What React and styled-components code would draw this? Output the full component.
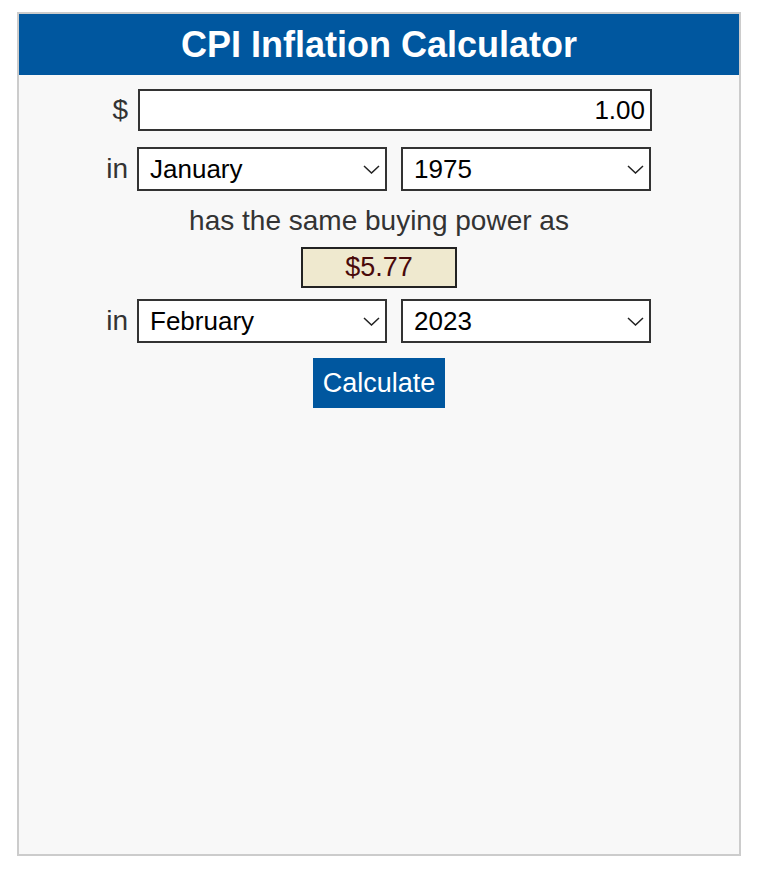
import React, { useState } from "react";
import styled, { createGlobalStyle } from "styled-components";

const GlobalStyle = createGlobalStyle`
  html, body {
    margin: 0;
    padding: 0;
    background: #fff;
    font-family: "Liberation Sans", Arial, sans-serif;
  }
`;

const Panel = styled.div`
  box-sizing: border-box;
  width: 724px;
  height: 844px;
  margin: 12px 0 0 17px;
  border: 2px solid #cccccc;
  background: #f8f8f8;
  display: flex;
  flex-direction: column;
  align-items: center;
`;

const Title = styled.h1`
  align-self: stretch;
  margin: 0;
  height: 61px;
  background: #00579f;
  color: #fff;
  font-size: 36px;
  font-weight: bold;
  display: flex;
  align-items: center;
  justify-content: center;
`;

const Row = styled.div`
  display: grid;
  grid-template-columns: 24px 514px;
  column-gap: 8px;
  align-items: center;
  margin-top: ${p => p.$top}px;
`;

const Label = styled.span`
  text-align: right;
  padding-right: 2px;
  font-size: 28px;
  color: #333;
`;

const AmountInput = styled.input`
  box-sizing: border-box;
  width: 514px;
  height: 42px;
  border: 2px solid #333;
  background: #fff;
  font-family: inherit;
  font-size: 26px;
  color: #000;
  text-align: right;
  padding: 0 5px;
  outline: none;
`;

const Selects = styled.div`
  display: flex;
  gap: 14px;
  margin-left: -1px;
`;

const SelectWrap = styled.div`
  position: relative;
  width: 250px;
  height: 44px;
`;

const Select = styled.select`
  appearance: none;
  box-sizing: border-box;
  width: 100%;
  height: 100%;
  border: 2px solid #333;
  border-radius: 0;
  background: #fff;
  font-family: inherit;
  font-size: 26px;
  color: #000;
  padding: 0 30px 0 11px;
  outline: none;
`;

const Chevron = styled.svg`
  position: absolute;
  right: 7px;
  top: 18px;
  pointer-events: none;
`;

const Caption = styled.div`
  margin-top: 15px;
  font-size: 28px;
  color: #333;
  line-height: 30px;
`;

const Result = styled.div`
  box-sizing: border-box;
  margin-top: 11px;
  width: 156px;
  height: 41px;
  border: 2px solid #222;
  background: #efe9cf;
  color: #4a0a0a;
  font-size: 27px;
  display: flex;
  align-items: center;
  justify-content: center;
`;

const Button = styled.button`
  margin-top: 15px;
  height: 50px;
  padding: 0 10px;
  border: none;
  background: #00579f;
  color: #fff;
  font-family: inherit;
  font-size: 27px;
  cursor: pointer;
`;

const months = [
  "January", "February", "March", "April", "May", "June",
  "July", "August", "September", "October", "November", "December",
];
const years = [];
for (let y = 1913; y <= 2023; y++) years.push(String(y));

function Dropdown({ value, options, onChange }) {
  return (
    <SelectWrap>
      <Select value={value} onChange={e => onChange(e.target.value)}>
        {options.map(o => (
          <option key={o}>{o}</option>
        ))}
      </Select>
      <Chevron width="17" height="9" viewBox="0 0 17 9">
        <path d="M1 1l7.5 7 7.5-7" fill="none" stroke="#222" strokeWidth="1.5" />
      </Chevron>
    </SelectWrap>
  );
}

function DateRow({ top, month, year, setMonth, setYear }) {
  return (
    <Row $top={top}>
      <Label>in</Label>
      <Selects>
        <Dropdown value={month} options={months} onChange={setMonth} />
        <Dropdown value={year} options={years} onChange={setYear} />
      </Selects>
    </Row>
  );
}

export default function App() {
  const [amount, setAmount] = useState("1.00");
  const [m1, setM1] = useState("January");
  const [y1, setY1] = useState("1975");
  const [m2, setM2] = useState("February");
  const [y2, setY2] = useState("2023");

  return (
    <>
      <GlobalStyle />
      <Panel>
        <Title>CPI Inflation Calculator</Title>
        <Row $top={14}>
          <Label>$</Label>
          <AmountInput value={amount} onChange={e => setAmount(e.target.value)} />
        </Row>
        <DateRow top={16} month={m1} year={y1} setMonth={setM1} setYear={setY1} />
        <Caption>has the same buying power as</Caption>
        <Result>$5.77</Result>
        <DateRow top={11} month={m2} year={y2} setMonth={setM2} setYear={setY2} />
        <Button>Calculate</Button>
      </Panel>
    </>
  );
}
